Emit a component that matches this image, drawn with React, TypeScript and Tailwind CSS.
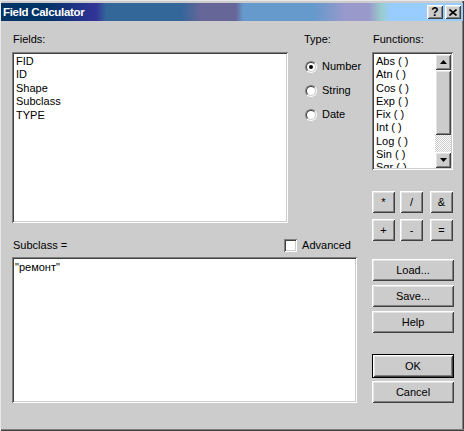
import React from 'react'

const FIELDS = ['FID', 'ID', 'Shape', 'Subclass', 'TYPE']
const FUNCTIONS = ['Abs ( )', 'Atn ( )', 'Cos ( )', 'Exp ( )', 'Fix ( )', 'Int ( )', 'Log ( )', 'Sin ( )', 'Sqr ( )']
const TYPES = ['Number', 'String', 'Date']

const raised =
  'bg-[#cccccc] shadow-[inset_1px_1px_0_#ffffff,inset_-1px_-1px_0_#404040,inset_2px_2px_0_#e4e4e4,inset_-2px_-2px_0_#808080]'
const sunken =
  'bg-white shadow-[inset_1px_1px_0_#808080,inset_-1px_-1px_0_#ffffff,inset_2px_2px_0_#404040,inset_-2px_-2px_0_#cccccc]'

function Btn({ label, className = '' }: { label: string; className?: string }) {
  return (
    <div className={`flex items-center justify-center h-[22px] shrink-0 ${raised} ${className}`}>
      <span className="leading-none">{label}</span>
    </div>
  )
}

function Radio({ checked }: { checked?: boolean }) {
  return (
    <div className="w-[12px] h-[12px] shrink-0 rounded-full border border-t-[#808080] border-l-[#808080] border-b-white border-r-white">
      <div className="w-full h-full rounded-full border border-t-[#404040] border-l-[#404040] border-b-[#cccccc] border-r-[#cccccc] bg-white flex items-center justify-center">
        {checked && <div className="w-[4px] h-[4px] rounded-full bg-black" />}
      </div>
    </div>
  )
}

function Arrow({ up }: { up?: boolean }) {
  return (
    <svg width="7" height="4" viewBox="0 0 7 4">
      <path d={up ? 'M3.5 0 L7 4 L0 4 Z' : 'M0 0 L7 0 L3.5 4 Z'} fill="#000" />
    </svg>
  )
}

export default function App() {
  return (
    <div
      className="w-[464px] h-[431px] bg-[#cccccc] text-black text-[11px] leading-[13px] border-t border-l border-t-[#e8e8e8] border-l-[#e8e8e8] pt-[2px] shadow-[inset_0_-1px_0_#404040,inset_0_-2px_0_#808080,inset_-1px_0_0_#404040,inset_-2px_0_0_#808080] flex flex-col"
      style={{ fontFamily: '"Liberation Sans", Arial, sans-serif' }}
    >
      {/* Title bar */}
      <div className="h-[18px] mr-[1px] flex items-center pl-[2px] pr-[2px] bg-[linear-gradient(90deg,#003366_0px,#003366_45px,#333399_95px,#336699_105px,#336699_180px,#666699_200px,#666699_235px,#6699cc_242px,#6699cc_313px,#9999cc_345px,#9999cc_368px,#99cccc_380px,#99ccff_390px)]">
        <span className="text-white font-bold text-[11.5px] tracking-[-0.3px] flex-1">Field Calculator</span>
        <div className={`w-[16px] h-[14px] flex items-center justify-center font-bold text-[12px] ${raised}`}>?</div>
        <div className={`w-[16px] h-[14px] ml-[2px] flex items-center justify-center ${raised}`}>
          <svg width="8" height="7" viewBox="0 0 8 7">
            <path d="M0.5 0.5 L7.5 6.5 M7.5 0.5 L0.5 6.5" stroke="#000" strokeWidth="1.6" />
          </svg>
        </div>
      </div>

      <div className="flex pl-[11px] pt-[12px]">
        {/* Left column */}
        <div className="w-[345px] shrink-0 flex flex-col">
          <div className="flex">
            <div className="w-[276px] shrink-0">
              <div className="h-[13px] pl-[1px]">Fields:</div>
              <div className={`mt-[6px] h-[171px] pl-[4px] pt-[3px] ${sunken}`}>
                {FIELDS.map((f) => (
                  <div key={f} className="h-[13.4px]">{f}</div>
                ))}
              </div>
            </div>
            <div className="ml-[16px] shrink-0">
              <div className="h-[13px]">Type:</div>
              <div className="mt-[14px] flex flex-col gap-[11px] pl-[1px]">
                {TYPES.map((t, i) => (
                  <div key={t} className="flex items-center h-[13px] whitespace-nowrap">
                    <Radio checked={i === 0} />
                    <span className="ml-[5px]">{t}</span>
                  </div>
                ))}
              </div>
            </div>
          </div>

          <div className="mt-[16px] h-[13px] flex items-center">
            <span className="pl-[1px] flex-1">Subclass =</span>
            <div className={`w-[13px] h-[13px] ${sunken}`} />
            <span className="ml-[5px] mr-[6px]">Advanced</span>
          </div>
          <div className={`mt-[5px] h-[146px] pl-[3px] pt-[4px] ${sunken}`}>"ремонт"</div>
        </div>

        {/* Right column */}
        <div className="ml-[15px] w-[82px] shrink-0 flex flex-col">
          <div className="h-[13px] pl-[1px]">Functions:</div>
          <div className={`mt-[6px] w-[81px] h-[118px] flex p-[2px] ${sunken}`}>
            <div className="flex-1 overflow-hidden pl-[2px] pt-[1px]">
              {FUNCTIONS.map((f) => (
                <div key={f} className="h-[13.3px] whitespace-nowrap">{f}</div>
              ))}
            </div>
            <div className="w-[16px] flex flex-col">
              <div className={`h-[16px] flex items-center justify-center ${raised}`}>
                <Arrow up />
              </div>
              <div className={`h-[65px] ${raised}`} />
              <div className="flex-1 bg-[repeating-conic-gradient(#ffffff_0_25%,#cccccc_0_50%)] bg-[length:2px_2px]" />
              <div className={`h-[16px] flex items-center justify-center ${raised}`}>
                <Arrow />
              </div>
            </div>
          </div>

          <div className="mt-[21px] flex">
            <Btn label="*" className="w-[23px]" />
            <Btn label="/" className="w-[23px] ml-[5px]" />
            <Btn label="&" className="w-[23px] ml-[7px]" />
          </div>
          <div className="mt-[6px] flex">
            <Btn label="+" className="w-[23px]" />
            <Btn label="-" className="w-[23px] ml-[5px]" />
            <Btn label="=" className="w-[23px] ml-[7px]" />
          </div>

          <Btn label="Load..." className="mt-[18px]" />
          <Btn label="Save..." className="mt-[4px]" />
          <Btn label="Help" className="mt-[4px]" />
          <div className="mt-[21px] border border-black">
            <Btn label="OK" className="h-[21px]" />
          </div>
          <Btn label="Cancel" className="mt-[3px]" />
        </div>
      </div>
    </div>
  )
}
